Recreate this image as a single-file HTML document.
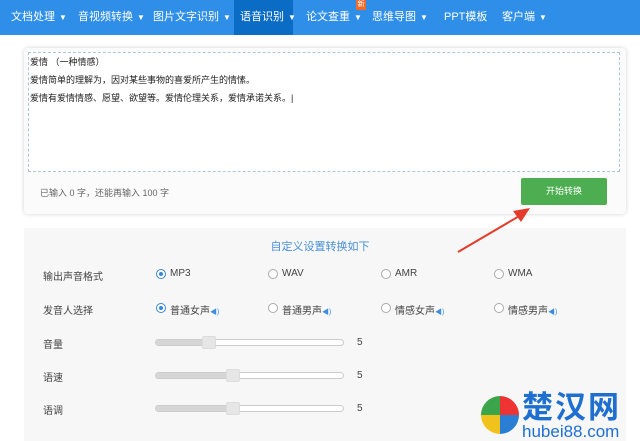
<!DOCTYPE html>
<html><head><meta charset="utf-8"><style>
*{margin:0;padding:0;box-sizing:border-box}
body{width:640px;height:441px;overflow:hidden;background:#fff;font-family:"Liberation Sans","Noto Sans CJK SC",sans-serif;position:relative;color:#333}
.nav{position:absolute;left:0;top:0;width:640px;height:35px;background:#2e8ee8}
.nav span{position:absolute;top:0;height:35px;line-height:35px;color:#fff;font-size:11px;white-space:nowrap}
.nav span .tri{position:static;font-size:8px;margin-left:4px}
.act{background:#0b6cc6}
.new{position:absolute;left:356px;top:0;width:10px;height:10px;background:#f06a2a;color:#fff;font-size:7px;line-height:10px;text-align:center}
.card{position:absolute;left:24px;top:48px;width:602px;height:166px;background:#fbfbfb;border-radius:4px;box-shadow:0 0 4px rgba(0,0,0,.18)}
.ta{position:absolute;left:28px;top:52px;width:592px;height:120px;background:#fff;border:1px dashed #a9c6e0}
.ta p{font-size:9px;line-height:18px;padding-left:1px;color:#222}
.cnt{position:absolute;left:40px;top:186px;font-size:9px;color:#666}
.btn{position:absolute;left:521px;top:178px;width:86px;height:27px;background:#4cae50;border-radius:2px;color:#fff;font-size:9px;text-align:center;line-height:27px}
.panel{position:absolute;left:24px;top:228px;width:602px;height:213px;background:#f7f7f7}
.t{position:absolute;font-size:10px;color:#444}
.title{position:absolute;left:0;width:640px;top:238px;text-align:center;font-size:11px;color:#4a90d8}
.r{position:absolute;width:10px;height:10px;border:1px solid #aaa;border-radius:50%;background:#fff}
.r.on{border-color:#3a86d6}
.r.on:after{content:"";position:absolute;left:2px;top:2px;width:4px;height:4px;border-radius:50%;background:#3a86d6}
.sp{color:#3a8ee0;font-size:7px}
.sl{position:absolute;left:155px;width:189px;height:7px;border:1px solid #ccc;border-radius:4px;background:#fff}
.fill{position:absolute;left:0;top:0;height:5px;background:#d6d6d6;border-radius:3px}
.th{position:absolute;top:-4px;width:14px;height:13px;background:#e6e6e6;border:1px solid #ddd;border-radius:2px}
.o{top:269px}
.p{top:303px}
</style></head><body>
<div class="nav">
<span style="left:11px">文档处理<span class="tri">▼</span></span>
<span style="left:78px">音视频转换<span class="tri">▼</span></span>
<span style="left:153px">图片文字识别<span class="tri">▼</span></span>
<span class="act" style="left:234px;width:59px;padding-left:6px">语音识别<span class="tri">▼</span></span>
<span style="left:306px">论文查重<span class="tri">▼</span></span>
<span style="left:372px">思维导图<span class="tri">▼</span></span>
<span style="left:444px">PPT模板</span>
<span style="left:502px">客户端<span class="tri">▼</span></span>
<div class="new">新</div>
</div>
<div class="card"></div>
<div class="ta"><p>爱情 （一种情感）</p><p>爱情简单的理解为，因对某些事物的喜爱所产生的情愫。</p><p>爱情有爱情情感、愿望、欲望等。爱情伦理关系，爱情承诺关系。|</p></div>
<div class="cnt">已输入 0 字，还能再输入 100 字</div>
<div class="btn">开始转换</div>
<div class="panel"></div>
<svg style="position:absolute;left:455px;top:205px;z-index:5" width="80" height="50"><line x1="3" y1="47" x2="66" y2="10" stroke="#e53a2a" stroke-width="2"/><polygon points="75,3 58,6 66,17" fill="#e53a2a"/></svg>
<div class="title">自定义设置转换如下</div>
<div class="t" style="left:43px;top:268px">输出声音格式</div>
<div class="r on o" style="left:156px"></div><div class="t" style="left:170px;top:268px">MP3</div>
<div class="r o" style="left:268px"></div><div class="t" style="left:282px;top:268px">WAV</div>
<div class="r o" style="left:381px"></div><div class="t" style="left:395px;top:268px">AMR</div>
<div class="r o" style="left:494px"></div><div class="t" style="left:508px;top:268px">WMA</div>
<div class="t" style="left:43px;top:302px">发音人选择</div>
<div class="r on p" style="left:156px"></div><div class="t" style="left:170px;top:302px">普通女声<span class="sp">◀)</span></div>
<div class="r p" style="left:268px"></div><div class="t" style="left:282px;top:302px">普通男声<span class="sp">◀)</span></div>
<div class="r p" style="left:381px"></div><div class="t" style="left:395px;top:302px">情感女声<span class="sp">◀)</span></div>
<div class="r p" style="left:494px"></div><div class="t" style="left:508px;top:302px">情感男声<span class="sp">◀)</span></div>
<div class="t" style="left:43px;top:336px">音量</div>
<div class="sl" style="top:339px"><div class="fill" style="width:52px"></div><div class="th" style="left:46px"></div></div><div class="t" style="left:357px;top:337px">5</div>
<div class="t" style="left:43px;top:369px">语速</div>
<div class="sl" style="top:372px"><div class="fill" style="width:76px"></div><div class="th" style="left:70px"></div></div><div class="t" style="left:357px;top:370px">5</div>
<div class="t" style="left:43px;top:402px">语调</div>
<div class="sl" style="top:405px"><div class="fill" style="width:76px"></div><div class="th" style="left:70px"></div></div><div class="t" style="left:357px;top:403px">5</div>
<div style="position:absolute;left:481px;top:396px;width:38px;height:38px;border-radius:50%;background:conic-gradient(#e33 0 25%,#2a7fd4 0 50%,#f1c21b 0 75%,#3aa54a 0)"></div>
<div style="position:absolute;left:522px;top:390px;font-size:31px;line-height:36px;font-weight:bold;color:#1f6fd0;letter-spacing:2px;white-space:nowrap">楚汉网</div>
<div style="position:absolute;left:522px;top:423px;font-size:17px;line-height:18px;color:#1f6fd0;white-space:nowrap">hubei88.com</div>
</body></html>
